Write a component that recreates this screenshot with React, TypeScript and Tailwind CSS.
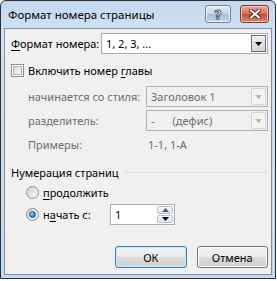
import React from 'react'

const font = { fontFamily: '"Noto Sans", "Liberation Sans", sans-serif' }

function DropArrow({ disabled }: { disabled?: boolean }) {
  return (
    <svg width="7" height="4" viewBox="0 0 7 4">
      <path d="M0 0h7L3.5 4z" fill={disabled ? '#b5b5b5' : '#000'} />
    </svg>
  )
}

function Combo({ value, width, disabled }: { value: React.ReactNode; width: string; disabled?: boolean }) {
  return (
    <div
      className={`flex h-[21px] shrink-0 ${width} border ${
        disabled ? 'border-[#adb2b5] bg-[#f0f0f0] text-[#6d6d6d]' : 'border-[#abadb3] bg-white text-black'
      }`}
    >
      <div className="flex flex-1 items-center whitespace-nowrap pl-[4px]">{value}</div>
      <div
        className={`m-px flex w-[15px] items-center justify-center border ${
          disabled
            ? 'border-[#d5d5d5] bg-[#f4f4f4]'
            : 'border-[#707070] bg-gradient-to-b from-[#f2f2f2] to-[#d4d4d4]'
        }`}
      >
        <DropArrow disabled={disabled} />
      </div>
    </div>
  )
}

function Radio({ checked }: { checked?: boolean }) {
  return (
    <div className="flex h-[13px] w-[13px] shrink-0 items-center justify-center rounded-full border border-[#8e8f8f] bg-gradient-to-br from-[#d4d4d4] to-[#f8f8f8]">
      {checked ? (
        <div className="h-[7px] w-[7px] rounded-full border border-[#1a5e9c] bg-[radial-gradient(circle_at_35%_35%,#9fdcff,#2b84d2_60%,#175aa0)]" />
      ) : (
        <div className="h-[9px] w-[9px] rounded-full bg-gradient-to-br from-[#cfcfcf] to-[#fbfbfb]" />
      )}
    </div>
  )
}

function Btn({ children, primary }: { children: React.ReactNode; primary?: boolean }) {
  return (
    <div
      className={`flex h-[22px] w-[73px] items-center justify-center rounded-[3px] border bg-[linear-gradient(#f2f2f2_0%,#ebebeb_48%,#dddddd_50%,#cfcfcf_100%)] ${
        primary ? 'border-[#3c7fb1] shadow-[inset_0_0_0_1px_#c6e6f6]' : 'border-[#707070] shadow-[inset_0_0_0_1px_#fcfcfc]'
      }`}
    >
      {children}
    </div>
  )
}

export default function App() {
  return (
    <div className="h-[281px] w-[277px] bg-white text-[11px] leading-none text-black" style={font}>
      <div className="flex h-[279px] w-[276px] flex-col rounded-t-[6px] border border-[#2e2e2e] bg-[linear-gradient(#c4d7ee,#d3e2f4_30px,#bfdcf3)]">
        {/* title bar */}
        <div className="flex h-[27px] items-start">
          <div className="whitespace-nowrap pl-[7px] pt-[8px] text-[11.5px]">Формат номера страницы</div>
          <div className="ml-auto mt-[4px] flex gap-[9px] pr-[6px]">
            <div className="flex h-[18px] w-[26px] items-center justify-center rounded-[3px] border border-[#6e7f94] bg-[linear-gradient(#e4ecf6,#c4d3e5_50%,#a9bdd6_51%,#c3d4e9)] shadow-[inset_0_0_0_1px_#eef4fb]">
              <span className="text-[13px] font-bold text-white [-webkit-text-stroke:1px_#4a5a70]" style={{ fontFamily: '"DejaVu Sans", sans-serif' }}>
                ?
              </span>
            </div>
            <div className="flex h-[18px] w-[29px] items-center justify-center rounded-[3px] border border-[#7a3b31] bg-[linear-gradient(#e9a99a,#d5705d_50%,#c24a35_51%,#d98a6d)] shadow-[inset_0_0_0_1px_#f0c2b8]">
              <svg width="12" height="10" viewBox="0 0 12 10">
                <path d="M2 1.5l8 7M10 1.5l-8 7" stroke="#5b2a22" strokeWidth="4" strokeLinecap="square" />
                <path d="M2 1.5l8 7M10 1.5l-8 7" stroke="#fff" strokeWidth="2" strokeLinecap="square" />
              </svg>
            </div>
          </div>
        </div>

        {/* client */}
        <div className="mx-[3px] mb-[3px] flex flex-1 flex-col whitespace-nowrap border border-[#7d8fa6] bg-[#f0f0f0] pl-[6px] pr-[3px]">
          <div className="mt-[4px] flex h-[21px] items-center">
            <div className="w-[90px] shrink-0">
              <span className="underline underline-offset-2">Ф</span>ормат номера:
            </div>
            <Combo value="1, 2, 3, ..." width="w-[167px]" />
          </div>

          <div className="mt-[9px] flex h-[15px] items-center gap-[4px]">
            <div className="flex h-[13px] w-[13px] shrink-0 items-center justify-center border border-[#8e8f8f] bg-white">
              <div className="h-[9px] w-[9px] border border-[#aeb3b9] bg-gradient-to-br from-[#d8d8d8] to-[#fbfbfb]" />
            </div>
            <div>
              Включить номер <span className="underline underline-offset-2">г</span>лавы
            </div>
          </div>

          <div className="mt-[8px] flex h-[21px] items-center text-[#6d6d6d]">
            <div className="w-[135px] shrink-0 pl-[17px]">начинается со стиля:</div>
            <Combo value="Заголовок 1" width="w-[122px]" disabled />
          </div>

          <div className="mt-[3px] flex h-[21px] items-center text-[#6d6d6d]">
            <div className="w-[135px] shrink-0 pl-[17px]">разделитель:</div>
            <Combo
              value={
                <span>
                  -<span className="pl-[18px]">(дефис)</span>
                </span>
              }
              width="w-[122px]"
              disabled
            />
          </div>

          <div className="mt-[6px] flex h-[15px] items-center text-[#6d6d6d]">
            <div className="w-[137px] shrink-0 pl-[17px]">Примеры:</div>
            <div>1-1, 1-A</div>
          </div>

          <div className="mt-[13px] flex h-[15px] items-center">
            <div>Нумерация страниц</div>
            <div className="ml-[6px] mr-[1px] h-px flex-1 bg-[#d5dfe5]" />
          </div>

          <div className="mt-[5px] flex h-[15px] items-center gap-[4px] pl-[15px]">
            <Radio />
            <div>
              <span className="underline underline-offset-2">п</span>родолжить
            </div>
          </div>

          <div className="mt-[4px] flex h-[21px] items-center pl-[15px]">
            <Radio checked />
            <div className="ml-[4px] w-[67px] shrink-0">
              н<span className="underline underline-offset-2">а</span>чать с:
            </div>
            <div className="flex h-[21px] w-[65px] shrink-0 border border-[#abadb3] bg-white">
              <div className="flex flex-1 items-center pl-[4px]">1</div>
              <div className="m-px flex w-[16px] flex-col gap-px">
                <div className="flex flex-1 items-center justify-center rounded-[2px] border border-[#b9c3cd] bg-gradient-to-b from-[#f4f7fa] to-[#dde5ed]">
                  <svg width="7" height="4" viewBox="0 0 7 4">
                    <path d="M0 4h7L3.5 0z" fill="#4d6185" />
                  </svg>
                </div>
                <div className="flex flex-1 items-center justify-center rounded-[2px] border border-[#b9c3cd] bg-gradient-to-b from-[#f4f7fa] to-[#dde5ed]">
                  <DropArrow />
                </div>
              </div>
            </div>
          </div>

          <div className="mt-[21px] flex gap-[10px] pl-[104px]">
            <Btn primary>ОК</Btn>
            <Btn>Отмена</Btn>
          </div>
        </div>
      </div>
    </div>
  )
}
